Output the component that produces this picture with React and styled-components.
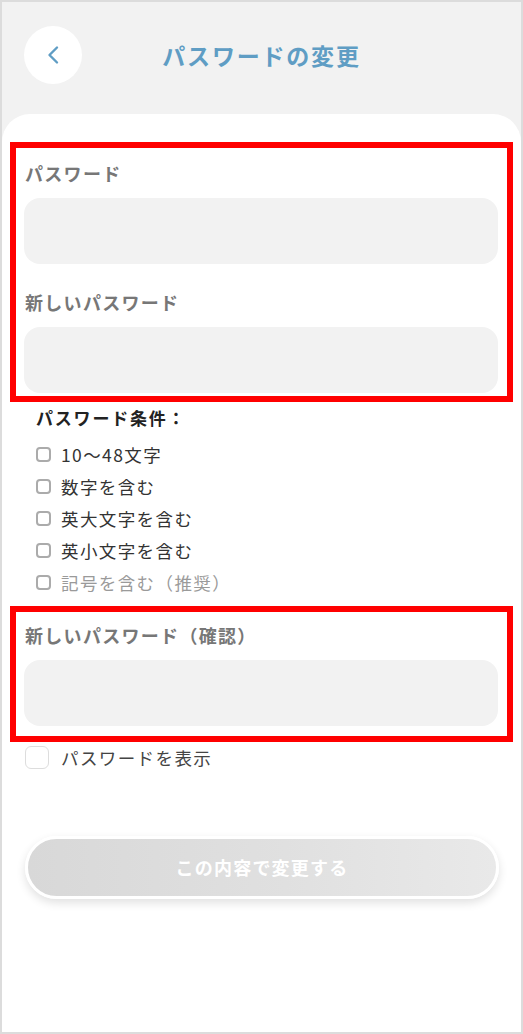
import styled, { createGlobalStyle } from "styled-components"

const GlobalStyle = createGlobalStyle`
  html, body {
    margin: 0;
    padding: 0;
    background: #ffffff;
  }
  * {
    box-sizing: border-box;
  }
  body {
    font-family: "Noto Sans CJK JP", "Noto Sans", sans-serif;
  }
`

const Frame = styled.div`
  width: 523px;
  height: 1034px;
  border: 2px solid #dcdcdc;
  background: #f2f2f2;
  display: flex;
  flex-direction: column;
`

const Header = styled.header`
  display: grid;
  grid-template-columns: 58px 1fr 58px;
  align-items: center;
  height: 112px;
  padding: 0 22px 6px;
`

const BackButton = styled.button`
  width: 58px;
  height: 58px;
  border: none;
  border-radius: 50%;
  background: #ffffff;
  display: flex;
  align-items: center;
  justify-content: center;
  padding: 0;
`

const Title = styled.h1`
  margin: 0;
  text-align: center;
  font-size: 23px;
  font-weight: 700;
  letter-spacing: 1.8px;
  color: #5f9dc4;
`

const Card = styled.main`
  flex: 1;
  background: #ffffff;
  border-radius: 28px 28px 0 0;
  padding: 28px 8px 0 8px;
`

const Highlight = styled.section`
  border: 6px solid #ff0000;
  padding: ${(p) => p.$pad};
  display: flex;
  flex-direction: column;
`

const Label = styled.label`
  display: block;
  padding-left: 1px;
  font-size: 18px;
  line-height: 24px;
  font-weight: 700;
  letter-spacing: 1.3px;
  color: #777777;
  margin-bottom: 13px;
`

const Input = styled.input`
  display: block;
  width: 100%;
  height: 66px;
  border: none;
  border-radius: 16px;
  background: #f2f2f2;
  outline: none;
  margin-bottom: ${(p) => p.$mb || "0"};
`

const Conditions = styled.div`
  padding: 4px 0 8px 26px;
`

const ConditionsTitle = styled.h2`
  margin: 0 0 9px;
  font-size: 17px;
  line-height: 24px;
  font-weight: 700;
  letter-spacing: 1.8px;
  color: #222222;
`

const ConditionList = styled.ul`
  list-style: none;
  margin: 0;
  padding: 0;
`

const ConditionItem = styled.li`
  display: flex;
  align-items: center;
  gap: 10px;
  height: 31.8px;
  font-size: 17.5px;
  letter-spacing: 1.4px;
  color: ${(p) => (p.$muted ? "#9a9a9a" : "#333333")};
`

const SmallBox = styled.span`
  width: 15px;
  height: 15px;
  border: 2px solid #ababab;
  border-radius: 4px;
  flex-shrink: 0;
`

const ShowRow = styled.label`
  display: flex;
  align-items: center;
  gap: 12px;
  padding: 3px 0 0 15px;
  font-size: 17.5px;
  letter-spacing: 1.4px;
  color: #444444;
`

const ShowBox = styled.span`
  width: 24px;
  height: 23px;
  border: 1px solid #dddddd;
  border-radius: 6px;
  background: #ffffff;
`

const SubmitButton = styled.button`
  display: block;
  width: 474px;
  height: 63px;
  margin: 66px 0 0 15px;
  border: 3px solid #ffffff;
  border-radius: 32px;
  background: linear-gradient(90deg, #d8d8d8 0%, #e0e0e0 55%, #e9e9e9 100%);
  box-shadow: 0 4px 10px rgba(0, 0, 0, 0.12);
  color: #ffffff;
  font-family: "Noto Sans CJK JP", "Noto Sans", sans-serif;
  font-size: 18px;
  font-weight: 700;
  letter-spacing: 1.2px;
`

const conditions = [
  { text: "10〜48文字" },
  { text: "数字を含む" },
  { text: "英大文字を含む" },
  { text: "英小文字を含む" },
  { text: "記号を含む（推奨）", muted: true },
]

const App = () => {
  return (
    <>
      <GlobalStyle />
      <Frame>
        <Header>
          <BackButton aria-label="戻る">
            <svg width="14" height="20" viewBox="0 0 14 20" fill="none">
              <path d="M11 2.5 L3.5 10 L11 17.5" stroke="#5f9dc4" strokeWidth="2.4" strokeLinecap="round" strokeLinejoin="round" />
            </svg>
          </BackButton>
          <Title>パスワードの変更</Title>
          <span />
        </Header>
        <Card>
          <Highlight $pad="13px 9px 3px 8px">
            <Label>パスワード</Label>
            <Input type="password" $mb="26px" />
            <Label>新しいパスワード</Label>
            <Input type="password" />
          </Highlight>
          <Conditions>
            <ConditionsTitle>パスワード条件：</ConditionsTitle>
            <ConditionList>
              {conditions.map((c) => (
                <ConditionItem key={c.text} $muted={c.muted}>
                  <SmallBox />
                  {c.text}
                </ConditionItem>
              ))}
            </ConditionList>
          </Conditions>
          <Highlight $pad="11px 9px 10px 8px">
            <Label>新しいパスワード（確認）</Label>
            <Input type="password" />
          </Highlight>
          <ShowRow>
            <ShowBox />
            パスワードを表示
          </ShowRow>
          <SubmitButton>この内容で変更する</SubmitButton>
        </Card>
      </Frame>
    </>
  )
}

export default App
